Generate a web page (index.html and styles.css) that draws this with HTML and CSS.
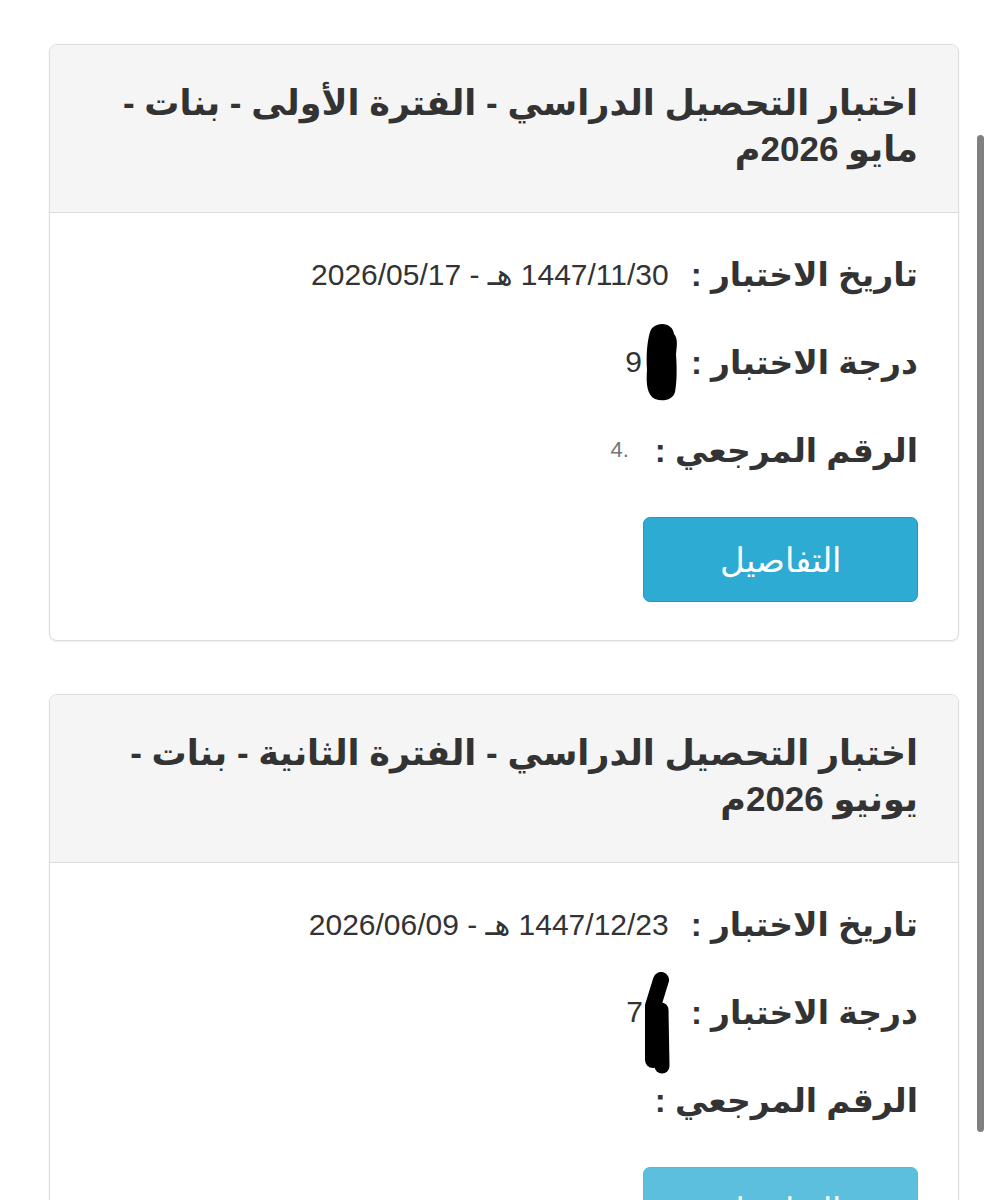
FILE: index.html
```html
<!DOCTYPE html>
<html lang="ar" dir="rtl">
<head>
    <meta charset="UTF-8">
    <meta name="viewport" content="width=device-width, initial-scale=1.0">
    <title>نتائج الاختبارات</title>
    <link rel="stylesheet" href="styles.css">
</head>
<body>

    <div class="results">

        <!-- First exam -->
        <div class="panel">
            <div class="panel-heading">
                <h3>اختبار التحصيل الدراسي - الفترة الأولى - بنات - مايو 2026م</h3>
            </div>
            <div class="panel-body">
                <div class="row">
                    <span class="label">تاريخ الاختبار :</span>
                    <span class="value">1447/11/30 هـ - 2026/05/17</span>
                </div>
                <div class="row">
                    <span class="label">درجة الاختبار :</span>
                    <svg class="redact" width="36" height="80" viewBox="0 0 36 80">
                        <path d="M14 3 C22 0 30 4 31 12 C35 16 34 24 33 32 C34 46 34 60 32 70 C30 78 20 80 12 77 C4 73 3 62 4 48 C3 34 4 20 7 10 C8 6 11 4 14 3 Z" fill="#000"/>
                    </svg>
                    <span class="value">9</span>
                </div>
                <div class="row">
                    <span class="label">الرقم المرجعي :</span>
                    <span class="value faded">.4</span>
                </div>
                <button class="btn-details">التفاصيل</button>
            </div>
        </div>

        <!-- Second exam -->
        <div class="panel">
            <div class="panel-heading">
                <h3>اختبار التحصيل الدراسي - الفترة الثانية - بنات - يونيو 2026م</h3>
            </div>
            <div class="panel-body">
                <div class="row">
                    <span class="label">تاريخ الاختبار :</span>
                    <span class="value">1447/12/23 هـ - 2026/06/09</span>
                </div>
                <div class="row">
                    <span class="label">درجة الاختبار :</span>
                    <svg class="redact redact-low" width="32" height="102" viewBox="0 0 32 102">
                        <path d="M20 8 L12 34 L12 88" stroke="#000" stroke-width="16" stroke-linecap="round" fill="none"/>
                        <path d="M20 38 L21 94" stroke="#000" stroke-width="15" stroke-linecap="round" fill="none"/>
                    </svg>
                    <span class="value">7</span>
                </div>
                <div class="row">
                    <span class="label">الرقم المرجعي :</span>
                    <span class="value"></span>
                </div>
                <button class="btn-details fading">التفاصيل</button>
            </div>
        </div>

    </div>

    <!-- iOS style overlay scrollbar -->
    <div class="scroll-thumb"></div>

</body>
</html>
```

FILE: styles.css
```css
/* General body styling */
body {
    font-family: 'Liberation Sans', 'DejaVu Sans', sans-serif;
    margin: 0;
    padding: 0;
    background-color: #fff;
    color: #333;
    direction: rtl;
}

/* Results list */
.results {
    padding: 44px 34px 0 49px;
}

/* Panel (card) */
.panel {
    background-color: #fff;
    border: 1px solid #ddd;
    border-radius: 8px;
    box-shadow: 0 1px 2px rgba(0, 0, 0, 0.08);
    margin-bottom: 53px;
    overflow: hidden;
}

.panel-heading {
    background-color: #f5f5f5;
    border-bottom: 1px solid #ddd;
    padding: 35px 40px 40px 40px;
}

.panel-heading h3 {
    margin: 0;
    font-size: 35px;
    line-height: 46px;
    font-weight: bold;
    color: #333;
}

/* Panel body */
.panel-body {
    padding: 39px 40px 38px 40px;
}

.row {
    display: flex;
    align-items: center;
    height: 44px;
    margin-bottom: 44px;
}

.row:nth-child(3) {
    margin-bottom: 45px;
}

.label {
    font-size: 33px;
    font-weight: bold;
    color: #333;
    margin-left: 22px;
}

.value {
    font-size: 30px;
    color: #333;
}

.value.faded {
    font-size: 22px;
    color: #777;
    margin-right: 4px;
}

.redact {
    flex-shrink: 0;
    margin-left: 1px;
    margin-right: -10px;
}

.redact-low {
    margin-top: 22px;
    margin-right: -4px;
    margin-left: -2px;
}

/* Details button */
.btn-details {
    display: block;
    width: 275px;
    height: 85px;
    background-color: #2eabd3;
    border: 1px solid #2996bd;
    border-radius: 7px;
    color: #fff;
    font-family: 'DejaVu Sans', sans-serif;
    font-size: 34px;
    font-weight: 300;
    cursor: pointer;
}

.btn-details.fading {
    background-color: #5bbfdd;
    border-color: #56b8d6;
}

/* Overlay scrollbar thumb */
.scroll-thumb {
    position: fixed;
    top: 135px;
    right: 9px;
    width: 7px;
    height: 997px;
    background-color: #808080;
    border-radius: 4px;
}
```
